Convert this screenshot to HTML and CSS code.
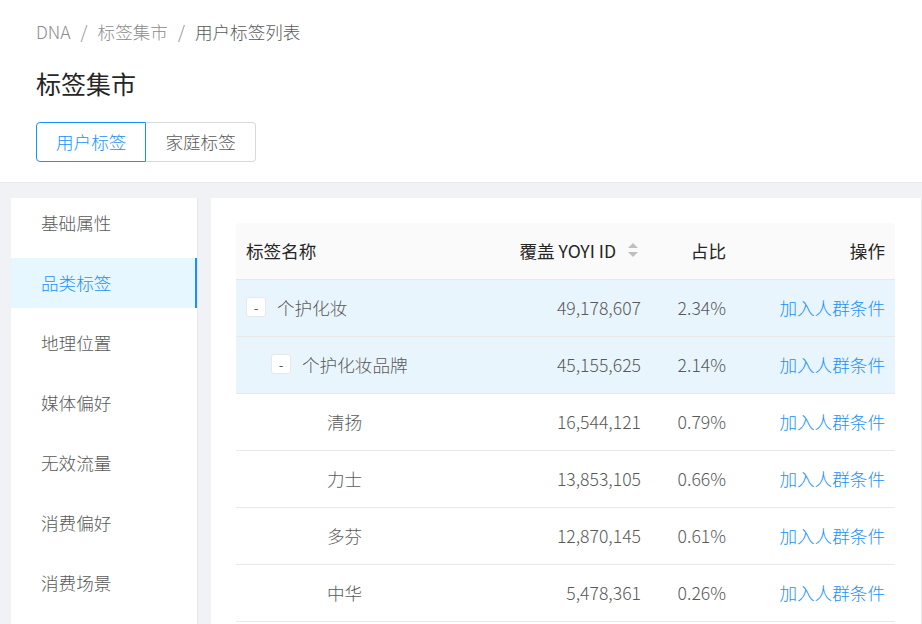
FILE: index.html
```html
<!DOCTYPE html>
<html lang="zh-CN">
<head>
<meta charset="utf-8">
<title>标签集市</title>
<link rel="stylesheet" href="styles.css">
</head>
<body>
<header class="page-header">
  <nav class="breadcrumb">
    <span class="crumb">DNA</span><span class="sep">/</span><span class="crumb">标签集市</span><span class="sep">/</span><span class="crumb current">用户标签列表</span>
  </nav>
  <h1 class="title">标签集市</h1>
  <div class="btn-group">
    <button class="seg active">用户标签</button><button class="seg">家庭标签</button>
  </div>
</header>
<main class="main">
  <aside class="sidebar">
    <ul class="menu">
      <li class="menu-item">基础属性</li>
      <li class="menu-item selected">品类标签</li>
      <li class="menu-item">地理位置</li>
      <li class="menu-item">媒体偏好</li>
      <li class="menu-item">无效流量</li>
      <li class="menu-item">消费偏好</li>
      <li class="menu-item">消费场景</li>
    </ul>
  </aside>
  <section class="content">
    <table class="table">
      <colgroup>
        <col class="c-name"><col class="c-cov"><col class="c-ratio"><col class="c-op">
      </colgroup>
      <thead>
        <tr>
          <th class="left">标签名称</th>
          <th class="right"><span class="th-sort"><span>覆盖 YOYI ID</span><svg class="sorter" width="10" height="16" viewBox="0 0 10 16"><path d="M5 1 L10 6 L0 6 Z" fill="#bfbfbf"/><path d="M0 10 L10 10 L5 15 Z" fill="#bfbfbf"/></svg></span></th>
          <th class="right">占比</th>
          <th class="right">操作</th>
        </tr>
      </thead>
      <tbody>
        <tr class="hl">
          <td><div class="name lv0"><span class="toggle">-</span><span>个护化妆</span></div></td>
          <td class="right">49,178,607</td><td class="right">2.34%</td><td class="right"><a class="link">加入人群条件</a></td>
        </tr>
        <tr class="hl">
          <td><div class="name lv1"><span class="toggle">-</span><span>个护化妆品牌</span></div></td>
          <td class="right">45,155,625</td><td class="right">2.14%</td><td class="right"><a class="link">加入人群条件</a></td>
        </tr>
        <tr>
          <td><div class="name lv2"><span class="spacer"></span><span>清扬</span></div></td>
          <td class="right">16,544,121</td><td class="right">0.79%</td><td class="right"><a class="link">加入人群条件</a></td>
        </tr>
        <tr>
          <td><div class="name lv2"><span class="spacer"></span><span>力士</span></div></td>
          <td class="right">13,853,105</td><td class="right">0.66%</td><td class="right"><a class="link">加入人群条件</a></td>
        </tr>
        <tr>
          <td><div class="name lv2"><span class="spacer"></span><span>多芬</span></div></td>
          <td class="right">12,870,145</td><td class="right">0.61%</td><td class="right"><a class="link">加入人群条件</a></td>
        </tr>
        <tr>
          <td><div class="name lv2"><span class="spacer"></span><span>中华</span></div></td>
          <td class="right">5,478,361</td><td class="right">0.26%</td><td class="right"><a class="link">加入人群条件</a></td>
        </tr>
      </tbody>
    </table>
  </section>
</main>
</body>
</html>
```

FILE: styles.css
```css
* { box-sizing: border-box; }
html, body { margin: 0; padding: 0; }
body {
  width: 922px;
  height: 624px;
  overflow: hidden;
  background: #fff;
  font-family: "Noto Sans CJK SC", "Noto Sans", sans-serif;
  font-size: 17.6px;
  font-weight: 300;
  color: #595959;
}
.page-header {
  padding: 20px 36px 20px;
  border-bottom: 1px solid #e8e8e8;
  background: #fff;
}
.breadcrumb {
  height: 24px;
  line-height: 24px;
  display: flex;
  align-items: center;
  color: #8c8c8c;
}
.sep { margin: 0 10px; color: #8c8c8c; }
.crumb.current { color: #595959; }
.title {
  margin: 22px 0 0;
  font-size: 25px;
  font-weight: 400;
  line-height: 34px;
  color: #262626;
}
.btn-group {
  margin-top: 22px;
  display: flex;
}
.seg {
  height: 40px;
  padding: 0 19px;
  font-family: inherit;
  font-size: 17.6px;
  font-weight: 300;
  line-height: 38px;
  color: #595959;
  background: #fff;
  border: 1px solid #d9d9d9;
  margin: 0;
  cursor: pointer;
}
.seg:first-child { border-radius: 4px 0 0 4px; }
.seg:last-child { border-radius: 0 4px 4px 0; border-left: 0; }
.seg.active { color: #1890ff; border-color: #1890ff; }

.main {
  display: flex;
  gap: 13px;
  background: #f0f2f5;
  padding: 15px 0 0 11px;
  height: 441px;
}
.sidebar {
  width: 187px;
  flex: none;
  background: #fff;
  border-right: 1px solid #e8e8e8;
}
.menu {
  list-style: none;
  margin: 0;
  padding: 0;
}
.menu-item {
  height: 50px;
  line-height: 50px;
  padding-left: 30px;
  margin-bottom: 10px;
  color: #595959;
}
.menu-item.selected {
  background: #e6f7ff;
  color: #1890ff;
  border-right: 2px solid #1890ff;
}
.content {
  flex: 1;
  background: #fff;
  border-right: 1px solid #e8e8e8;
  padding: 25px 25px 0;
}
.table {
  width: 659px;
  border-collapse: separate;
  border-spacing: 0;
  table-layout: fixed;
}
.c-name { width: 250px; }
.c-cov { width: 165px; }
.c-ratio { width: 85px; }
.c-op { width: 159px; }
.table th {
  height: 57px;
  padding: 0 10px 2px;
  background: #fafafa;
  border-bottom: 1px solid #e8e8e8;
  font-weight: 400;
  color: #262626;
}
.table th:first-child { border-top-left-radius: 4px; }
.table th:last-child { border-top-right-radius: 4px; }
.table td {
  height: 57px;
  padding: 0 10px 2px;
  border-bottom: 1px solid #e8e8e8;
  color: #595959;
  white-space: nowrap;
}
.left { text-align: left; }
.right { text-align: right; }
.th-sort {
  display: inline-flex;
  align-items: center;
}
.sorter {
  margin-left: 12px;
  margin-right: 3px;
}
.hl td { background: #e9f5fd; }
.name {
  display: flex;
  align-items: center;
}
.lv1 { padding-left: 25px; }
.lv2 { padding-left: 50px; }
.toggle, .spacer {
  width: 20px;
  height: 20px;
  flex: none;
  margin-right: 11px;
}
.toggle {
  border: 1px solid #e8e8e8;
  border-radius: 3px;
  background: #fff;
  display: flex;
  align-items: center;
  justify-content: center;
  font-size: 14px;
  line-height: 1;
  color: #262626;
}
.link {
  color: #1890ff;
  text-decoration: none;
  cursor: pointer;
}
```
